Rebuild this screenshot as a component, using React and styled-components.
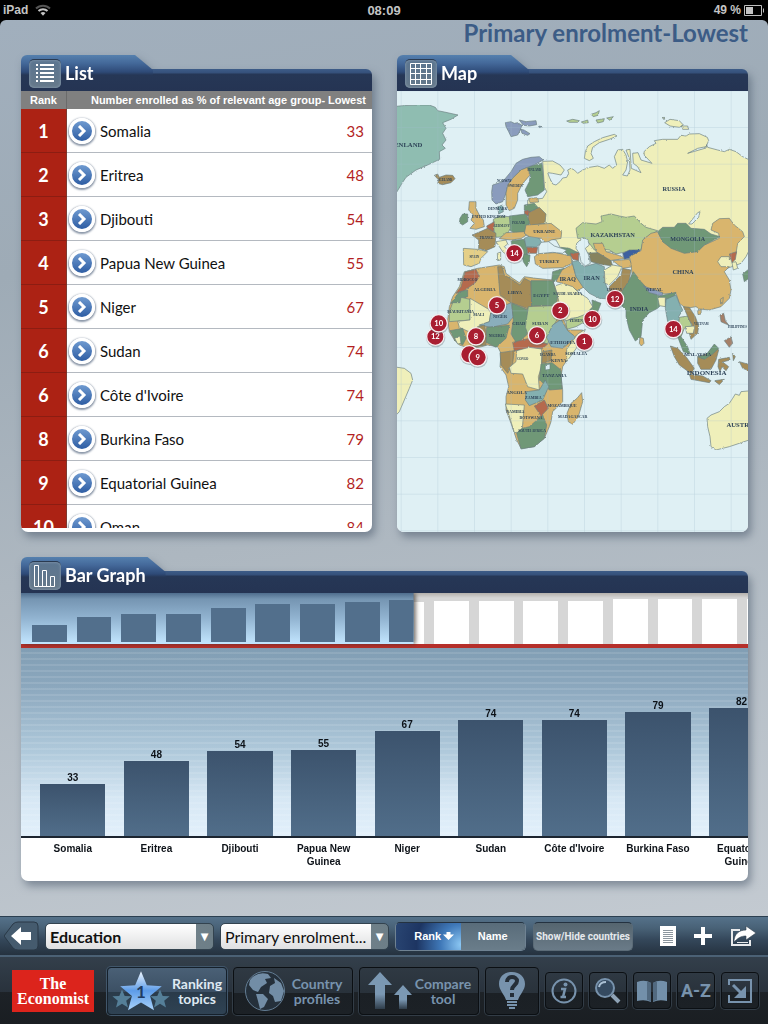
import React, { useState } from "react";
import styled, { createGlobalStyle } from "styled-components";

const GlobalStyle = createGlobalStyle`
  * {
    box-sizing: border-box;
  }

  body {
    margin: 0;
    background: #000;
    font-family: Lato, 'Open Sans', sans-serif;
  }

  button, select {
    font-family: inherit;
  }
`

const Screen = styled.div`
  display: flex;
  flex-direction: column;
  min-height: 100vh;
`

const StatusBar = styled.header`
  display: grid;
  grid-template-columns: 1fr auto 1fr;
  align-items: center;
  height: 20px;
  padding: 0 3px;
  background: #000;
  color: #c4c4c4;
  font-family: 'Liberation Sans', sans-serif;
  font-weight: 700;
  font-size: 13px;
`

const StatusGroup = styled.div`
  display: flex;
  align-items: center;
  justify-content: ${props => props.$end ? 'flex-end' : 'flex-start'};
  gap: ${props => props.$end ? '3px' : '7px'};
  font-size: 12px;
`

const Content = styled.main`
  flex: 1;
  display: flex;
  flex-direction: column;
  padding: 0 20px 35px 21px;
  border-radius: 6px 6px 0 0;
  background: linear-gradient(170deg, #a1afbd 0%, #9eabb6 25%, #adb7c0 55%, #c3cad1 100%);
`

const PageTitle = styled.h1`
  margin: 0;
  height: 35px;
  font-size: 24px;
  line-height: 25px;
  font-weight: 700;
  text-align: right;
  color: #3c5c86;
`

const Panels = styled.div`
  flex: 1 1 0;
  min-height: 0;
  display: grid;
  grid-template-columns: 1fr 1fr;
  grid-template-rows: minmax(0, 1fr);
  gap: 25px;
  margin-bottom: 25px;
`

const Panel = styled.section`
  display: flex;
  flex-direction: column;
  min-width: 0;
  min-height: 0;
  filter: drop-shadow(3px 5px 4px rgba(60, 75, 95, 0.5));
`

const PanelHeader = styled.div`
  display: grid;
  flex: none;
  height: 36px;

  > * {
    grid-area: 1 / 1;
  }
`

const HeaderStrip = styled.div`
  align-self: end;
  height: 22px;
  border-radius: 0 6px 0 0;
  background: linear-gradient(#3d5c88 0, #35507a 4px, #263756 5px, #253453 100%);
`

const Tab = styled.div`
  justify-self: start;
  display: flex;
  align-items: center;
  gap: 4px;
  min-width: 132px;
  padding: 0 20px 0 8px;
  border-radius: 6px 0 0 0;
  background: linear-gradient(#5580ae 0, #44699a 8px, #2e4a77 17px, #263756 20px, #253453 100%);
  clip-path: polygon(0 0, calc(100% - 18px) 0, 100% 15px, 100% 100%, 0 100%);
`

const TabIcon = styled.span`
  display: flex;
  align-items: center;
  justify-content: center;
  width: 32px;
  height: 29px;
  border-radius: 5px;
  border-top: 1px solid #2a3a50;
  background: linear-gradient(#5b7590, #66798a);
  box-shadow: inset 0 0 3px #8fa3b5;
`

const TabTitle = styled.h2`
  margin: 0;
  font-size: 18px;
  line-height: 22px;
  font-weight: 700;
  color: #fff;
`

const PanelBody = styled.div`
  flex: 1;
  min-height: 0;
  overflow: hidden;
  background: #fff;
  border-radius: 0 0 7px 7px;
  padding-bottom: ${props => props.$inset ? '4px' : '0'};
`

const ListScroll = styled.div`
  height: 100%;
  overflow-y: auto;
  scrollbar-width: none;
`

const RankTable = styled.table`
  width: 100%;
  border-collapse: separate;
  border-spacing: 0;
`

const HeadCell = styled.th`
  position: sticky;
  top: 0;
  z-index: 1;
  height: 18px;
  width: ${props => props.$narrow ? '46px' : 'auto'};
  padding: ${props => props.$narrow ? '0' : '0 6px 0 0'};
  border-right: ${props => props.$narrow ? '1px solid #6b6b6b' : '0'};
  background: #808080;
  color: #fff;
  font-family: 'Liberation Sans', sans-serif;
  font-size: 11px;
  line-height: 14px;
  font-weight: 700;
  text-align: ${props => props.$narrow ? 'center' : 'right'};
  white-space: nowrap;
`

const RankCell = styled.th`
  height: 44px;
  padding: 0;
  border-right: 1px solid #7d3a30;
  border-bottom: 1px solid #8c1d12;
  background: #ac2214;
  color: #fff;
  font-size: 18px;
  font-weight: 700;
`

const NameCell = styled.td`
  padding: 0 0 0 2px;
  border-bottom: 1px solid #b4b9c0;
  font-size: 15px;
  color: #111;
`

const NameGroup = styled.div`
  display: flex;
  align-items: center;
  gap: 5px;
`

const ValueCell = styled.td`
  padding: 0 8px 0 0;
  border-bottom: 1px solid #b4b9c0;
  text-align: right;
  font-size: 15px;
  color: #b31f24;
`

const RoundButton = styled.button`
  display: flex;
  align-items: center;
  justify-content: center;
  width: 26px;
  height: 26px;
  padding: 0;
  border: 3px solid #fff;
  border-radius: 50%;
  background: linear-gradient(#6f9ad0, #2e5da3);
  box-shadow: 0 1px 2px 1px #8b97a8;
`

const MapSvg = styled.svg`
  display: block;
  width: 100%;
  height: 100%;
  background: #dff0f4;
`

const Graph = styled.div`
  overflow: hidden;
  background: #fff;
  border-radius: 0 0 7px 7px;
`

const Overview = styled.div`
  display: grid;
  height: 55px;
  border-bottom: 4px solid #b52f2a;
  background: #d6d6d6;

  > * {
    grid-area: 1 / 1;
  }
`

const OverviewWindow = styled.div`
  display: grid;
  filter: drop-shadow(2px 0 2px rgba(60, 50, 40, 0.7));
`

const OverviewBars = styled.div`
  display: grid;
  grid-auto-flow: column;
  grid-auto-columns: 6.2%;
  align-items: end;
  overflow: hidden;
  padding: 0 0 ${props => props.$selected ? '2px' : '0'} 6px;
  background: ${props => props.$selected
    ? 'linear-gradient(#4f6d8d 0, #7595b2 6px, #92b4d1 50%, #c3e6ff 100%)'
    : 'linear-gradient(#b4b0ac 0, #d6d6d6 5px)'};
  clip-path: ${props => props.$selected ? 'inset(0 46% 0 0)' : 'none'};
`

const OverviewBar = styled.div`
  width: 78%;
  margin: 0 auto;
  background: ${props => props.$selected ? '#526f8c' : '#fff'};
`

const Chart = styled.div`
  height: 190px;
  padding-left: 10px;
  border-bottom: 2px solid #1c2530;
  background:
    repeating-linear-gradient(rgba(255, 255, 255, 0) 0 4px, rgba(255, 255, 255, 0.1) 4px 6px),
    linear-gradient(#819eb4 0%, #8ba7bd 20%, #afc9db 55%, #d6e7f4 80%, #e2f0fb 100%);
`

const Columns = styled.div`
  display: grid;
  grid-auto-flow: column;
  grid-auto-columns: 11.66%;
  height: 100%;
`

const Column = styled.div`
  display: flex;
  flex-direction: column;
  align-items: center;
  justify-content: flex-end;
  height: 100%;
`

const ChartText = styled.span`
  font-family: 'Liberation Sans', sans-serif;
  font-size: 10px;
  line-height: 13px;
  font-weight: 700;
  text-align: center;
  color: #0d1218;
`

const Bar = styled.div`
  width: 78%;
  background: linear-gradient(#3c536d, #516e8a);
`

const Labels = styled.div`
  height: 43px;
  padding: 4px 0 0 10px;
`

const Label = styled(ChartText)`
  padding: 0 8px;
`

const Toolbar = styled.div`
  display: flex;
  align-items: center;
  height: 41px;
  padding: 0 12px 0 4px;
  border-top: 1px solid #2b3f50;
  border-bottom: 2px solid #4b6175;
  background: linear-gradient(#55728a 0, #486176 30%, #34475a 60%, #25323f 100%);
`

const BackButton = styled.button`
  display: flex;
  padding: 0;
  border: 0;
  background: none;
`

const SelectBox = styled.label`
  display: flex;
  width: 169px;
  height: 27px;
  margin-left: 6px;
  overflow: hidden;
  border: 1px solid #33434f;
  border-radius: 5px;
  background: linear-gradient(90deg, #7f8f97, #6d7e87);
`

const Select = styled.select`
  appearance: none;
  flex: 1;
  min-width: 0;
  padding: 0 4px;
  border: 0;
  border-radius: 4px 0 0 4px;
  background: linear-gradient(#fff, #dfe0e1);
  color: #111;
  font-size: 16px;
  font-weight: ${props => props.$bold ? '700' : '400'};
`

const SelectArrow = styled.span`
  width: 17px;
  color: #fff;
  font-family: 'DejaVu Sans', sans-serif;
  font-size: 10px;
  line-height: 25px;
  text-align: center;
`

const Segments = styled.div`
  display: flex;
  flex: none;
  width: 131px;
  height: 29px;
  margin-left: 6px;
  overflow: hidden;
  border: 1px solid #6f8292;
  border-top-color: #243240;
  border-radius: 5px;
`

const Segment = styled.button`
  flex: 1;
  padding: 0;
  border: 0;
  background: ${props => props.$active
    ? 'radial-gradient(circle at 100% 80%, #8cc8f4 0, #3f78b8 30%, #1d3562 65%, #2a4673 100%)'
    : 'linear-gradient(#596c7a, #6a7d8a)'};
  color: #fff;
  font-family: 'Liberation Sans', sans-serif;
  font-size: 11px;
  font-weight: 700;
`

const SegmentContent = styled.span`
  display: flex;
  align-items: center;
  justify-content: center;
  gap: 2px;
  padding-left: ${props => props.$shift ? '12px' : '0'};
`

const ToggleButton = styled.button`
  flex: none;
  width: 100px;
  height: 29px;
  margin-left: 7px;
  padding: 0;
  border: 1px solid #5b6b77;
  border-top-color: #243240;
  border-radius: 5px;
  background: linear-gradient(#55656f, #6a7b88);
  color: #e6e9ec;
  font-family: Roboto, sans-serif;
  font-size: 10px;
  font-weight: 700;
  white-space: nowrap;
`

const Actions = styled.div`
  display: flex;
  flex: 1;
  justify-content: flex-end;
  align-items: center;
  gap: 18px;
`

const ActionButton = styled.button`
  display: flex;
  padding: 0;
  border: 0;
  background: none;
`

const BottomNav = styled.nav`
  display: flex;
  align-items: center;
  gap: 6px;
  height: 67px;
  padding: 0 8px 0 12px;
  background: linear-gradient(#333f4b 0, #29323c 52%, #1d2227 53%, #1a1e22 100%);
`

const Brand = styled.a`
  display: flex;
  flex-direction: column;
  align-items: center;
  justify-content: center;
  flex: none;
  width: 82px;
  height: 42px;
  margin-right: 7px;
  background: #dc241c;
  color: #fff;
  font-family: 'Liberation Serif', serif;
  font-size: 16px;
  line-height: 15px;
  font-weight: 700;
  text-decoration: none;
`

const NavButton = styled.button`
  display: flex;
  align-items: center;
  justify-content: center;
  gap: 2px;
  flex: ${props => props.$wide ? '0 0 120px' : props.$small ? '0 0 38px' : '0 0 54px'};
  height: ${props => props.$small ? '37px' : '48px'};
  padding: 0;
  border: 1px solid ${props => props.$active ? '#15202b' : '#0b0f13'};
  border-radius: 4px;
  box-shadow: 0 0 0 1px ${props => props.$active ? '#41566a' : '#323c46'};
  background: ${props => props.$active
    ? 'linear-gradient(#4a6076 0, #3c5064 52%, #2a3b4a 53%, #2f4253 100%)'
    : 'linear-gradient(#2f3943 0, #29323b 54%, #1b2025 55%, #1c2126 100%)'};
  color: ${props => props.$active ? '#dfe9f2' : '#7893ad'};
  font-size: 14px;
  line-height: 15px;
  font-weight: 700;
`

const Letters = styled.span`
  font-family: Roboto, sans-serif;
  font-size: 18px;
`

const ranking = [
  { rank: 1, name: "Somalia", value: 33 },
  { rank: 2, name: "Eritrea", value: 48 },
  { rank: 3, name: "Djibouti", value: 54 },
  { rank: 4, name: "Papua New Guinea", value: 55 },
  { rank: 5, name: "Niger", value: 67 },
  { rank: 6, name: "Sudan", value: 74 },
  { rank: 6, name: "Côte d'Ivoire", value: 74 },
  { rank: 8, name: "Burkina Faso", value: 79 },
  { rank: 9, name: "Equatorial Guinea", value: 82 },
  { rank: 10, name: "Oman", value: 84 }
]

const overviewValues = [33, 48, 54, 55, 67, 74, 74, 79, 82, 84, 84, 84, 84, 88, 88, 88, 88]

const yellow = "#efefba"
const green = "#6f9877"
const orange = "#d9b56d"
const olive = "#a58c59"
const lime = "#b5ce90"
const teal = "#84b0b0"
const slate = "#8a9cbd"
const brick = "#b56b4e"

// fill, outline
const lands = [
  ["#8fbdb1", "M-9 50L20 47 60 45 100 45 118 52 125 62 145 66 186 75 165 88 140 98 150 115 140 130 150 150 138 165 148 175 130 185 131 208 95 225 60 240 30 262 18 280 0 310Z"],
  [olive, "M115 256L125 252 130 262 150 255 170 256 177 266 165 278 140 284 125 280 128 270Z"],
  [slate, "M328 98L345 95 355 100 365 98 378 106 372 122 365 135 345 140 338 125 330 110ZM370 90L390 95 420 92 422 104 400 108 382 106ZM374 118L384 120 402 131 395 136 378 130ZM428 108L438 110 430 113Z"],
  [lime, "M512 93L530 88 550 92 545 97 520 97ZM556 96L575 90 577 98 562 100ZM585 73L600 68 610 62 606 76 592 80ZM600 90L625 86 622 95 605 99ZM632 84L652 80 642 91Z"],
  [yellow, "M565 205L568 185 575 168 595 155 620 143 655 133 663 138 640 148 610 158 590 172 585 190 592 205 580 212Z"],
  [yellow, "M806 98L822 88 850 92 862 105 850 112 822 108ZM855 108L875 108 878 118 860 118ZM798 83L805 82 806 88Z"],
  [yellow, "M440 214L470 213 492 225 505 240 495 255 470 250 455 248 460 262 470 282 480 285 492 275 500 264 512 262 518 250 515 240 525 235 535 240 545 250 560 240 580 232 605 228 625 235 640 225 650 235 662 225 655 200 665 180 680 178 690 195 695 215 690 240 680 255 694 258 702 240 700 205 690 180 702 178 706 235 735 248 725 230 712 220 710 190 726 188 735 210 768 220 745 196 744 185 760 170 780 160 775 152 800 148 845 148 855 136 870 138 880 132 910 131 934 142 938 152 930 170 905 175 875 190 930 174 932 164 935 172 965 180 985 185 1000 178 1020 185 1040 200 1065 212 1065 470 1050 500 1035 520 980 540 900 490 780 470 600 490 500 485 480 450 420 440 395 380 395 330 440 325 452 305 445 290Z"],
  [green, "M392 232L415 225 438 220 440 240 445 300 425 315 395 320 387 300 400 275 403 255 395 240Z"],
  [slate, "M287 305L290 285 320 275 345 245 360 220 380 208 405 202 430 200 442 210 415 224 395 232 375 240 350 264 335 287 330 310 320 335 300 342 288 330Z"],
  [orange, "M375 240L395 232 402 255 385 275 375 290 365 310 365 330 355 355 340 362 330 345 330 310 335 285 350 265Z"],
  [teal, "M305 350L320 345 322 365 308 372Z"],
  [orange, "M398 325L425 323 428 336 402 338Z"],
  [green, "M385 345L415 340 428 355 400 366 385 360Z"],
  [brick, "M385 362L405 364 400 378 386 374Z"],
  [olive, "M398 368L430 352 450 372 447 400 410 406 395 400Z"],
  [green, "M340 378L390 372 400 395 395 425 360 432 340 420Z"],
  [lime, "M292 388L310 378 340 380 343 415 330 440 300 442 292 415Z"],
  [brick, "M272 408L295 395 293 428 275 418Z"],
  [olive, "M228 435L255 424 275 415 300 430 297 470 270 482 248 475 248 450Z"],
  [orange, "M220 335L240 335 240 355 250 375 262 390 265 410 240 418 222 415 235 400 225 390 232 375 218 360Z"],
  [green, "M192 385L200 372 215 372 215 395 200 405 190 398Z"],
  ["#e5cf87", "M202 475L245 478 275 485 255 505 250 520 225 530 203 525Z"],
  [yellow, "M300 455L330 450 335 462 325 470 345 490 370 505 360 515 345 505 320 485 310 470ZM304 490L314 486 314 510 305 512Z"],
  [orange, "M330 428L385 425 390 436 375 446 345 450 310 446Z"],
  [green, "M345 452L385 448 392 470 395 500 375 505 350 480Z"],
  [teal, "M385 445L400 438 425 437 437 458 420 472 390 470Z"],
  [brick, "M392 472L425 472 422 490 395 490Z"],
  [green, "M378 492L402 495 400 515 392 530 382 515Z"],
  [orange, "M390 405L440 402 465 400 497 425 495 445 465 450 450 460 435 445 400 440 385 430Z"],
  [green, "M495 472L520 475 550 490 545 500 520 500Z"],
  [brick, "M522 490L548 488 548 512 530 508Z"],
  [orange, "M415 500L430 490 480 488 525 498 528 520 500 533 440 535 418 522Z"],
  [green, "M470 545L505 535 500 560 478 570 465 590Z"],
  [orange, "M498 540L530 522 540 560 565 590 545 602 500 580 480 575Z"],
  [yellow, "M470 590L500 580 530 590 545 605 575 625 590 650 565 680 525 685 510 695 495 665 478 630Z"],
  [lime, "M510 692L545 682 570 672 580 688 540 710 512 718Z"],
  [green, "M588 630L615 640 605 665 578 692 568 672 590 652Z"],
  [teal, "M528 515L545 512 565 530 600 520 625 530 625 560 628 580 640 610 645 627 610 625 580 610 560 590 540 560Z"],
  [lime, "M540 415L560 398 600 402 618 395 615 378 645 372 670 378 690 382 715 378 735 400 750 412 785 422 765 435 745 445 738 465 735 480 705 482 660 492 640 480 620 478 595 480 580 460 565 445 545 445Z"],
  [orange, "M592 460L620 460 630 485 665 495 690 505 640 512 600 485Z"],
  ["#87835f", "M578 490L605 488 645 512 650 528 610 522 585 515Z"],
  ["#3d60a0", "M680 490L700 480 732 480 730 492 700 505 685 508Z"],
  [orange, "M650 512L700 508 712 530 680 535Z"],
  [yellow, "M625 540L650 525 678 530 665 560 640 585 627 580Z"],
  [olive, "M640 590L675 555 680 535 705 540 700 570 690 600 675 628 645 627 640 605Z"],
  [orange, "M700 500L735 482 740 450 765 430 785 425 800 455 850 480 900 485 925 465 970 445 968 430 945 420 950 400 970 386 1000 385 1015 405 1040 425 1045 440 1025 460 1020 490 1000 510 1000 500 975 500 965 515 975 530 1000 530 985 545 1000 570 1005 600 1000 625 975 650 940 660 910 657 900 650 870 655 850 640 840 610 790 612 750 600 710 572 705 520Z"],
  [green, "M785 425L800 412 835 412 845 400 870 400 885 415 925 418 945 432 972 440 925 465 905 485 865 490 825 475 800 455Z"],
  [green, "M678 605L700 570 712 545 735 575 760 602 790 618 840 607 830 630 800 640 785 655 760 668 740 690 735 740 718 753 700 720 690 680 690 660 675 645 670 627Z"],
  [slate, "M742 588L800 608 798 618 760 608Z"],
  [yellow, "M785 622L808 622 808 650 790 647Z"],
  [orange, "M732 742L742 745 744 760 736 768 730 760Z"],
  [teal, "M810 628L840 615 850 640 860 660 848 680 855 700 848 722 835 695 815 695 808 655Z"],
  [lime, "M850 682L875 678 888 708 865 715 852 748 846 722Z"],
  [olive, "M862 650L880 652 898 680 908 708 905 730 885 748 880 730 893 712 880 690Z"],
  [yellow, "M868 710L896 708 892 730 872 730Z"],
  [green, "M845 740L855 740 875 770 882 792 862 785Z"],
  [olive, "M823 768L845 775 870 800 895 835 887 852 850 825 835 800ZM880 853L920 858 945 872 940 878 885 868ZM955 872L985 868 970 884Z"],
  [olive, "M905 800L935 790 955 765 968 780 960 810 945 838 915 838 905 820Z"],
  [green, "M905 800L930 795 955 762 968 775 950 792 925 808Z"],
  [olive, "M968 808L1000 802 1002 810 980 816 998 830 990 842 978 830 972 845 966 830Z"],
  ["#a58068", "M972 675L983 670 988 692 998 705 985 700 975 695ZM985 752L1005 740 1010 760 1000 772Z"],
  [olive, "M1010 790L1018 800 1012 812ZM1030 815L1065 825 1065 845 1040 835Z"],
  [brick, "M1000 492L1022 485 1018 508 1008 518Z"],
  [yellow, "M1008 518L1020 515 1025 535 1012 540Z"],
  [green, "M1040 552L1055 540 1065 545 1065 560 1045 575Z"],
  [orange, "M973 628L982 622 980 640 974 642ZM905 662L916 658 915 672 906 674Z"],
  [yellow, "M1065 902L1035 905 1030 916 1018 912 1010 925 1000 940 985 950 970 965 945 975 933 985 935 1010 942 1040 945 1070 960 1080 1000 1070 1030 1060 1065 1048Z"],
  [yellow, "M-9 830L25 835 45 850 50 870 40 895 25 930 10 965 -9 985Z"],
  [orange, "M205 545L245 535 310 525 325 530 330 550 350 565 370 578 385 560 420 565 470 570 480 600 490 640 500 680 515 720 560 720 540 760 520 800 500 830 495 860 500 900 500 935 470 965 465 995 460 1010 445 1045 415 1070 375 1075 362 1050 345 1000 330 960 330 920 338 890 330 855 312 830 315 790 305 770 275 765 250 772 220 775 190 765 175 750 160 725 155 690 160 650 170 620 190 590Z"],
  [brick, "M207 546L240 538 250 560 238 578 200 605 180 610 195 590Z"],
  [green, "M165 640L190 605 215 600 215 620 195 625 190 640Z"],
  [lime, "M160 665L170 638 192 638 195 622 222 628 222 690 160 695Z"],
  [yellow, "M222 625L285 662 280 695 245 710 225 728 190 712 185 694 222 690Z"],
  ["#8aaebc", "M285 665L345 638 352 680 335 702 285 712 250 705 280 695Z"],
  [olive, "M305 530L318 530 325 555 350 570 372 585 385 565 405 575 407 660 345 638 312 615Z"],
  [green, "M405 572L470 572 485 620 480 647 407 647Z"],
  [green, "M347 640L397 660 392 735 362 760 345 732 352 690Z"],
  [lime, "M397 650L475 647 488 680 470 712 455 762 400 745 388 712Z"],
  ["#86aeb8", "M470 705L495 688 515 722 540 742 500 775 465 770 452 742Z"],
  [green, "M272 712L340 706 330 745 300 772 270 757Z"],
  [olive, "M235 715L265 705 272 735 270 765 235 770 215 740Z"],
  [green, "M162 722L200 715 210 745 200 765 178 752Z"],
  [yellow, "M176 745L192 738 195 760 185 762Z"],
  [brick, "M350 757L400 745 455 762 440 775 400 775 355 783Z"],
  [olive, "M312 788L355 782 350 820 335 850 315 825Z"],
  [yellow, "M362 782L400 772 437 777 437 830 427 860 430 900 395 890 380 852 345 850 340 832 360 815Z"],
  [olive, "M440 785L468 780 465 812 437 820Z"],
  [yellow, "M512 778L545 732 568 718 548 765 512 815Z"],
  [green, "M435 822L468 818 495 840 498 897 460 900 430 868Z"],
  [teal, "M390 905L430 900 448 870 458 890 440 930 400 947 388 930Z"],
  [yellow, "M328 942L385 945 378 1025 355 1028 342 985Z"],
  [brick, "M415 948L445 930 457 955 435 978Z"],
  [green, "M362 1030L378 1015 400 1010 440 975 452 1005 445 1045 415 1070 375 1077Z"],
  [orange, "M557 908L560 935 547 980 530 1003 517 995 513 970 525 940 543 925Z"]
]

const seas = [
  "M435 457L458 455 475 468 512 480 500 490 470 487 428 491 428 470Z",
  "M542 460L560 443 575 448 580 465 568 475 578 495 583 520 568 528 555 515 550 490 540 475Z",
  "M878 402L905 368 912 365 908 382 888 402Z",
  "M448 825L462 822 462 838 448 840Z"
]

// name, x, y, font size
const places = [
  ["GREENLAND", 15, 172, 20],
  ["NORWAY", 325, 275, 10],
  ["SWEDEN", 358, 290, 10],
  ["FINLAND", 415, 242, 9],
  ["ICELAND", 148, 272, 9],
  ["DENMARK", 305, 361, 11],
  ["UNITED KINGDOM", 278, 385, 11],
  ["GERMANY", 317, 412, 9],
  ["POLAND", 368, 402, 9],
  ["FRANCE", 272, 446, 10],
  ["SPAIN", 235, 505, 10],
  ["UKRAINE", 445, 430, 14],
  ["TURKEY", 460, 519, 14],
  ["RUSSIA", 834, 304, 19],
  ["KAZAKHSTAN", 650, 440, 19],
  ["MONGOLIA", 875, 454, 18],
  ["CHINA", 861, 552, 19],
  ["IRAN", 587, 571, 19],
  ["IRAQ", 515, 572, 19],
  ["NEPAL", 775, 603, 15],
  ["INDIA", 729, 663, 19],
  ["PAKISTAN", 655, 602, 9],
  ["MOROCCO", 214, 572, 11],
  ["ALGERIA", 266, 602, 14],
  ["LIBYA", 357, 612, 14],
  ["EGYPT", 436, 622, 14],
  ["SAUDI ARABIA", 515, 615, 12],
  ["YEMEN", 540, 695, 11],
  ["MAURITANIA", 194, 668, 12],
  ["MALI", 248, 678, 12],
  ["NIGER", 312, 685, 13],
  ["CHAD", 368, 705, 13],
  ["SUDAN", 432, 705, 14],
  ["NIGERIA", 302, 742, 11],
  ["ETHIOPIA", 500, 761, 15],
  ["SOMALIA", 540, 794, 14],
  ["UGANDA", 455, 799, 11],
  ["KENYA", 488, 815, 13],
  ["CONGO", 380, 810, 9],
  ["TANZANIA", 475, 862, 14],
  ["ANGOLA", 362, 912, 14],
  ["ZAMBIA", 412, 927, 12],
  ["MOZAMBIQUE", 498, 951, 12],
  ["NAMIBIA", 358, 968, 12],
  ["BOTSWANA", 405, 986, 12],
  ["SOUTH AFRICA", 408, 1026, 11],
  ["MADAGASCAR", 530, 985, 12],
  ["MALAYSIA", 905, 798, 15],
  ["INDONESIA", 932, 856, 21],
  ["PHILIPPINES", 1024, 714, 9],
  ["VIETNAM", 916, 705, 9],
  ["AUSTRALIA", 1050, 1010, 20]
]

const pins = [
  { rank: 14, x: 355, y: 490 },
  { rank: 5, x: 303, y: 646 },
  { rank: 12, x: 118, y: 740 },
  { rank: 10, x: 128, y: 700 },
  { rank: 8, x: 240, y: 739 },
  { rank: "", x: 220, y: 793 },
  { rank: 9, x: 245, y: 802 },
  { rank: 6, x: 423, y: 736 },
  { rank: 2, x: 493, y: 662 },
  { rank: 10, x: 589, y: 687 },
  { rank: 1, x: 565, y: 755 },
  { rank: 12, x: 657, y: 627 },
  { rank: 14, x: 832, y: 717 }
]

function WorldMap() {
  return (
    <MapSvg viewBox="3 3 1053 1323" preserveAspectRatio="xMidYMin slice" role="img" aria-label="Map">
      <defs>
        <pattern id="graticule" x="14" y="111" width="110" height="110" patternUnits="userSpaceOnUse">
          <path d="M0 0H110M0 0V110" fill="none" stroke="#9fbccb" strokeWidth="3" />
        </pattern>
        <filter id="coast" x="0" y="0" width="1" height="1">
          <feTurbulence type="fractalNoise" baseFrequency="0.2" numOctaves="2" seed="4" />
          <feDisplacementMap in="SourceGraphic" scale="6" xChannelSelector="R" yChannelSelector="G" />
        </filter>
      </defs>
      <g filter="url(#coast)" strokeLinejoin="round">
        {lands.map(([fill, d]) => (
          <path key={d} d={d} fill={fill} stroke="#6b7f80" strokeWidth="2" />
        ))}
        {seas.map(d => (
          <path key={d} d={d} fill="#dff0f4" stroke="#6b7f80" strokeWidth="2" />
        ))}
      </g>
      <rect x="0" y="0" width="1060" height="1330" fill="url(#graticule)" opacity="0.5" />
      <g fill="#2e4358" fontFamily="'Liberation Serif', serif" fontWeight="700" textAnchor="middle">
        {places.map(([name, x, y, size]) => (
          <text key={name} x={x} y={y} fontSize={size}>{name}</text>
        ))}
      </g>
      <g fontFamily="Lato, sans-serif" fontWeight="700" fontSize="23" textAnchor="middle">
        {pins.map(({ rank, x, y }) => (
          <g key={`${x}-${y}`}>
            <circle cx={x + 1} cy={y + 3} r="29" fill="#56656b" opacity="0.35" />
            <circle cx={x} cy={y} r="26" fill="#a91e31" stroke="#f6eef0" strokeWidth="4" />
            <text x={x} y={y + 8} fill="#fff">{rank}</text>
          </g>
        ))}
      </g>
    </MapSvg>
  )
}

function ListIcon() {
  return (
    <svg width="18" height="19" viewBox="0 0 18 19" stroke="#fff" strokeWidth="2">
      <path d="M0 1h2M4 1h14M0 5h2M4 5h14M0 9h2M4 9h14M0 13h2M4 13h14M0 17h2M4 17h14" />
    </svg>
  )
}

function GridIcon() {
  return (
    <svg width="22" height="22" viewBox="0 0 22 22" fill="none" stroke="#fff">
      <path d="M.5.5h21v21H.5zM5.5.5v21M10.5.5v21M16.5.5v21M.5 5.5h21M.5 10.5h21M.5 16.5h21" />
    </svg>
  )
}

function BarsIcon() {
  return (
    <svg width="22" height="22" viewBox="0 0 22 22" fill="none" stroke="#fff">
      <path d="M.5.5h4v21h-4zM8.5 5.5h4v16h-4zM16.5 11.5h4v10h-4zM4.5 21.5h12" />
    </svg>
  )
}

const PanelHead = ({ icon, title }) => (
  <PanelHeader>
    <HeaderStrip />
    <Tab>
      <TabIcon>{icon}</TabIcon>
      <TabTitle>{title}</TabTitle>
    </Tab>
  </PanelHeader>
)

const Overviews = ({ selected }) => (
  <OverviewBars $selected={selected} aria-hidden="true">
    {overviewValues.map((value, index) => (
      <OverviewBar key={index} $selected={selected} style={{ height: `${value / 2 + 1}px` }} />
    ))}
  </OverviewBars>
)

const star = "M0-16L4.5-5.2 16-4.5 7 3 10 14 0 8-10 14-7 3-16-4.5-4.5-5.2Z"

function App() {
  const [sort, setSort] = useState("rank")

  return (
    <Screen>
      <GlobalStyle />
      <StatusBar>
        <StatusGroup>
          iPad
          <svg width="16" height="12" viewBox="0 0 16 12" fill="none" strokeWidth="2">
            <path d="M1 4.5a10 10 0 0 1 14 0" stroke="#555" />
            <path d="M3.5 7a6.5 6.5 0 0 1 9 0" stroke="#c4c4c4" />
            <path d="M5.5 9a4 4 0 0 1 5 0L8 11.8z" fill="#c4c4c4" />
          </svg>
        </StatusGroup>
        <span>08:09</span>
        <StatusGroup $end>
          49 %
          <svg width="21" height="11" viewBox="0 0 21 11" fill="none" stroke="#bdbdbd">
            <path d="M.5.5h17v10H.5zM19.5 3.5v4" />
            <path d="M2 2h7v7H2z" fill="#c4c4c4" stroke="none" />
          </svg>
        </StatusGroup>
      </StatusBar>

      <Content>
        <PageTitle>Primary enrolment-Lowest</PageTitle>
        <Panels>
          <Panel>
            <PanelHead icon={<ListIcon />} title="List" />
            <PanelBody $inset>
              <ListScroll>
                <RankTable>
                  <thead>
                    <tr>
                      <HeadCell $narrow>Rank</HeadCell>
                      <HeadCell colSpan={2}>Number enrolled as % of relevant age group- Lowest</HeadCell>
                    </tr>
                  </thead>
                  <tbody>
                    {ranking.map(({ rank, name, value }) => (
                      <tr key={name}>
                        <RankCell scope="row">{rank}</RankCell>
                        <NameCell>
                          <NameGroup>
                            <RoundButton aria-label={name}>
                              <svg width="10" height="12" viewBox="0 0 10 12" fill="none" stroke="#fff" strokeWidth="3">
                                <path d="M2 1l5 5-5 5" />
                              </svg>
                            </RoundButton>
                            {name}
                          </NameGroup>
                        </NameCell>
                        <ValueCell>{value}</ValueCell>
                      </tr>
                    ))}
                  </tbody>
                </RankTable>
              </ListScroll>
            </PanelBody>
          </Panel>

          <Panel>
            <PanelHead icon={<GridIcon />} title="Map" />
            <PanelBody>
              <WorldMap />
            </PanelBody>
          </Panel>
        </Panels>

        <Panel>
          <PanelHead icon={<BarsIcon />} title="Bar Graph" />
          <Graph>
            <Overview>
              <Overviews />
              <OverviewWindow>
                <Overviews selected />
              </OverviewWindow>
            </Overview>
            <Chart>
              <Columns>
                {ranking.slice(0, 9).map(({ name, value }) => (
                  <Column key={name}>
                    <ChartText>{value}</ChartText>
                    <Bar style={{ height: `${value / 1.2}%` }} />
                  </Column>
                ))}
              </Columns>
            </Chart>
            <Labels>
              <Columns>
                {ranking.slice(0, 9).map(({ name }) => (
                  <Label key={name}>{name}</Label>
                ))}
              </Columns>
            </Labels>
          </Graph>
        </Panel>
      </Content>

      <Toolbar>
        <BackButton aria-label="Back">
          <svg width="35" height="30" viewBox="0 0 35 30">
            <path d="M0 15L9 3Q11 1 14 1H30Q34 1 34 5V25Q34 29 30 29H14Q11 29 9 27Z" fill="#455b6e" stroke="#2a3947" />
            <path d="M7 15L17 6v5h10v8H17v5z" fill="#fff" />
          </svg>
        </BackButton>
        <SelectBox>
          <Select $bold aria-label="Topic">
            <option>Education</option>
          </Select>
          <SelectArrow>▼</SelectArrow>
        </SelectBox>
        <SelectBox>
          <Select aria-label="Ranking">
            <option>Primary enrolment...</option>
          </Select>
          <SelectArrow>▼</SelectArrow>
        </SelectBox>
        <Segments>
          <Segment $active={sort === "rank"} onClick={() => setSort("rank")}>
            <SegmentContent $shift>
              Rank
              <svg width="11" height="8" viewBox="0 0 11 8" fill="#fff">
                <path d="M3.5 0h4v2.500H11L5.500 8 0 2.500h3.500z" />
              </svg>
            </SegmentContent>
          </Segment>
          <Segment $active={sort === "name"} onClick={() => setSort("name")}>
            <SegmentContent>Name</SegmentContent>
          </Segment>
        </Segments>
        <ToggleButton>Show/Hide countries</ToggleButton>
        <Actions>
          <ActionButton aria-label="Notes">
            <svg width="16" height="20" viewBox="0 0 16 20">
              <path d="M0 0h16v20H0z" fill="#fff" />
              <path d="M3 4.5h10M3 6.5h10M3 8.5h10M3 10.5h10M3 12.5h10M3 14.5h10M3 16.5h10" stroke="#8c969e" />
            </svg>
          </ActionButton>
          <ActionButton aria-label="Add">
            <svg width="18" height="18" viewBox="0 0 18 18">
              <path d="M7 0h4v7h7v4h-7v7H7v-7H0V7h7z" fill="#fff" />
            </svg>
          </ActionButton>
          <ActionButton aria-label="Share">
            <svg width="26" height="21" viewBox="0 0 26 21">
              <path d="M10 4H2v15h18v-5" fill="none" stroke="#e8eaec" strokeWidth="2" />
              <path d="M4 16C4 8 9 4 16 4V0l10 7-10 7v-4c-5 0-8 2-12 6z" fill="#fff" stroke="#33424f" strokeWidth=".6" />
              <path d="M7 16.5h11" stroke="#e8eaec" />
            </svg>
          </ActionButton>
        </Actions>
      </Toolbar>

      <BottomNav>
        <Brand href="#">
          <span>The</span>
          <span>Economist</span>
        </Brand>
        <NavButton $wide $active>
          <svg width="58" height="44" viewBox="0 0 58 44">
            <defs>
              <linearGradient id="star" x2="0" y2="1">
                <stop offset="0" stopColor="#f0f7ff" />
                <stop offset=".5" stopColor="#5d9ce8" />
                <stop offset="1" stopColor="#a9d3fb" />
              </linearGradient>
            </defs>
            <path d={star} transform="translate(10 30) scale(.6)" fill="#557f98" />
            <path d={star} transform="translate(48 30) scale(.6)" fill="#557f98" />
            <path d={star} transform="translate(29 23) scale(1.3)" fill="url(#star)" />
            <text x="29" y="29" fill="#203b63" fontFamily="Lato, sans-serif" fontSize="17" fontWeight="700" textAnchor="middle">1</text>
          </svg>
          <span>Ranking<br />topics</span>
        </NavButton>
        <NavButton $wide>
          <svg width="46" height="42" viewBox="0 0 46 42">
            <circle cx="21" cy="21" r="19.5" fill="#25303b" stroke="#637d94" />
            <path d="M6 10Q13 1 24 4L27 8 21 9 23 13 17 17 14 22 9 20 5 15ZM12 24L19 24 24 29 20 37 16 39 14 31ZM30 8L37 13 40 21 37 31 31 32 29 26 25 23 26 16 31 13Z" fill="#728da6" />
          </svg>
          <span>Country<br />profiles</span>
        </NavButton>
        <NavButton $wide>
          <svg width="46" height="40" viewBox="0 0 46 40">
            <defs>
              <linearGradient id="rise" x2="0" y2="1">
                <stop offset=".6" stopColor="#7b98b3" />
                <stop offset="1" stopColor="#2f3d4a" />
              </linearGradient>
            </defs>
            <path d="M13 1L25 14H18V38H8V14H1Z" fill="url(#rise)" />
            <path d="M36 14L45 24H40V38H32V24H27Z" fill="url(#rise)" />
          </svg>
          <span>Compare<br />tool</span>
        </NavButton>
        <NavButton aria-label="Help">
          <svg width="28" height="40" viewBox="0 0 28 40">
            <path d="M14 1C6 1 1 6 1 13c0 6 5 10 7 16h12c2-6 7-10 7-16C27 6 22 1 14 1z" fill="#7893ad" />
            <path d="M9 31h10M9 34h10M11 37h6" stroke="#7893ad" strokeWidth="2" />
            <path d="M9 11c0-7 10-6 10-1 0 4-5 4-5 9M14 22v4" fill="none" stroke="#252e38" strokeWidth="4" />
          </svg>
        </NavButton>
        <NavButton $small aria-label="Information">
          <svg width="26" height="26" viewBox="0 0 26 26" fill="none" stroke="#7893ad">
            <circle cx="13" cy="13" r="11.5" strokeWidth="2" />
            <path d="M10 11h4l-2 8h3M9.5 19h3" strokeWidth="2.5" />
            <circle cx="14.5" cy="6.5" r="2" fill="#7893ad" stroke="none" />
          </svg>
        </NavButton>
        <NavButton $small aria-label="Search">
          <svg width="28" height="28" viewBox="0 0 28 28">
            <circle cx="11" cy="11" r="9" fill="#354a60" stroke="#7893ad" strokeWidth="2" />
            <path d="M5 10q1-5 7-5" stroke="#a9bfd3" strokeWidth="2" fill="none" />
            <path d="M18 18l7 7" stroke="#8fa3b6" strokeWidth="4" />
          </svg>
        </NavButton>
        <NavButton $small aria-label="Library">
          <svg width="32" height="24" viewBox="0 0 32 24">
            <path d="M1 3Q9 0 15 4V23Q9 20 1 22ZM31 3Q23 0 17 4V23Q23 20 31 22Z" fill="#7390aa" />
            <path d="M11 2.5q3 0 4 1.5v19q-2-2-4-2zM21 2.5q-3 0-4 1.5v19q2-2 4-2z" fill="#526a80" />
          </svg>
        </NavButton>
        <NavButton $small>
          <Letters>A-Z</Letters>
        </NavButton>
        <NavButton $small aria-label="Collapse">
          <svg width="26" height="26" viewBox="0 0 26 26" fill="none" stroke="#7893ad" strokeWidth="2">
            <path d="M2 7V2H24V24H2V17" />
            <path d="M6 7l9 9" strokeWidth="3" />
            <path d="M19 8v12H7z" fill="#7893ad" stroke="none" />
          </svg>
        </NavButton>
      </BottomNav>
    </Screen>
  )
}

export default App
